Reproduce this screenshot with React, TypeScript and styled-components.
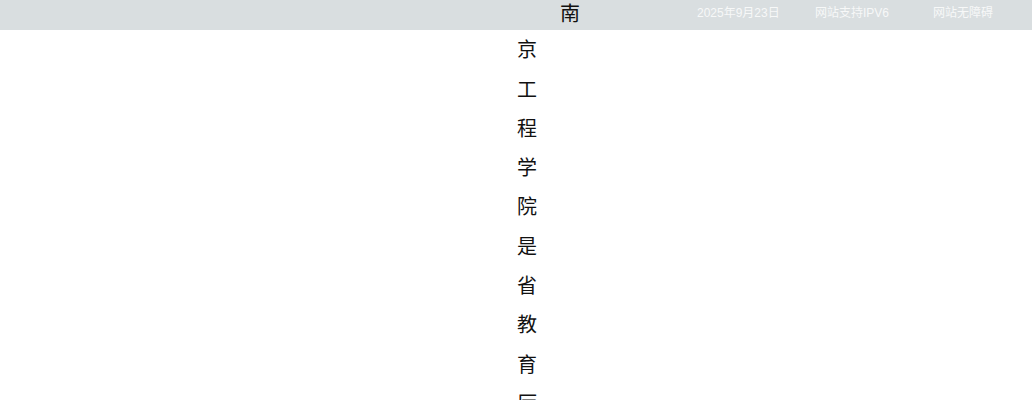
import React from 'react'
import styled, { createGlobalStyle } from 'styled-components'

const GlobalStyle = createGlobalStyle`
    body {
        margin: 0;
        padding: 0;
        background: #fff;
        font-family: "Liberation Sans", "Noto Sans CJK SC", sans-serif;
    }
`

const Page = styled.div`
    display: flex;
    flex-direction: column;
`

const TopBar = styled.div`
    display: flex;
    align-items: flex-start;
    height: 30px;
    padding-left: 697px;
    background: #d9dee0;
`

const Intro = styled.p`
    width: 20px;
    margin: -40px 0 0 517px;
    font-size: 20px;
    line-height: 39.3px;
    text-indent: 43px;
    color: #111;
    font-family: "Noto Sans CJK SC", sans-serif;
`

const FirstChar = styled.span`
    position: relative;
    top: 3px;
`

const InfoList = styled.ul`
    display: flex;
    margin: 0;
    padding: 0;
    list-style: none;
`

const InfoItem = styled.li`
    flex-shrink: 0;
    width: ${(p: { $w: number }) => p.$w}px;
    height: 30px;
    line-height: 26px;
    font-size: 12px;
    color: #f7f8f8;
    white-space: nowrap;
`

const infoItems = [
    { text: '2025年9月23日', w: 118 },
    { text: '网站支持IPV6', w: 118 },
    { text: '网站无障碍', w: 99 },
]

const text = '京工程学院是省教育厅直属的一所以工为主的应用型本科高校'

const App = () => {
    return (
        <Page>
            <GlobalStyle />
            <TopBar>
                <InfoList>
                    {infoItems.map((item, index) => (
                        <InfoItem key={index} $w={item.w}>{item.text}</InfoItem>
                    ))}
                </InfoList>
            </TopBar>
            <Intro>
                <FirstChar>南</FirstChar>
                {text}
            </Intro>
        </Page>
    )
}

export default App
